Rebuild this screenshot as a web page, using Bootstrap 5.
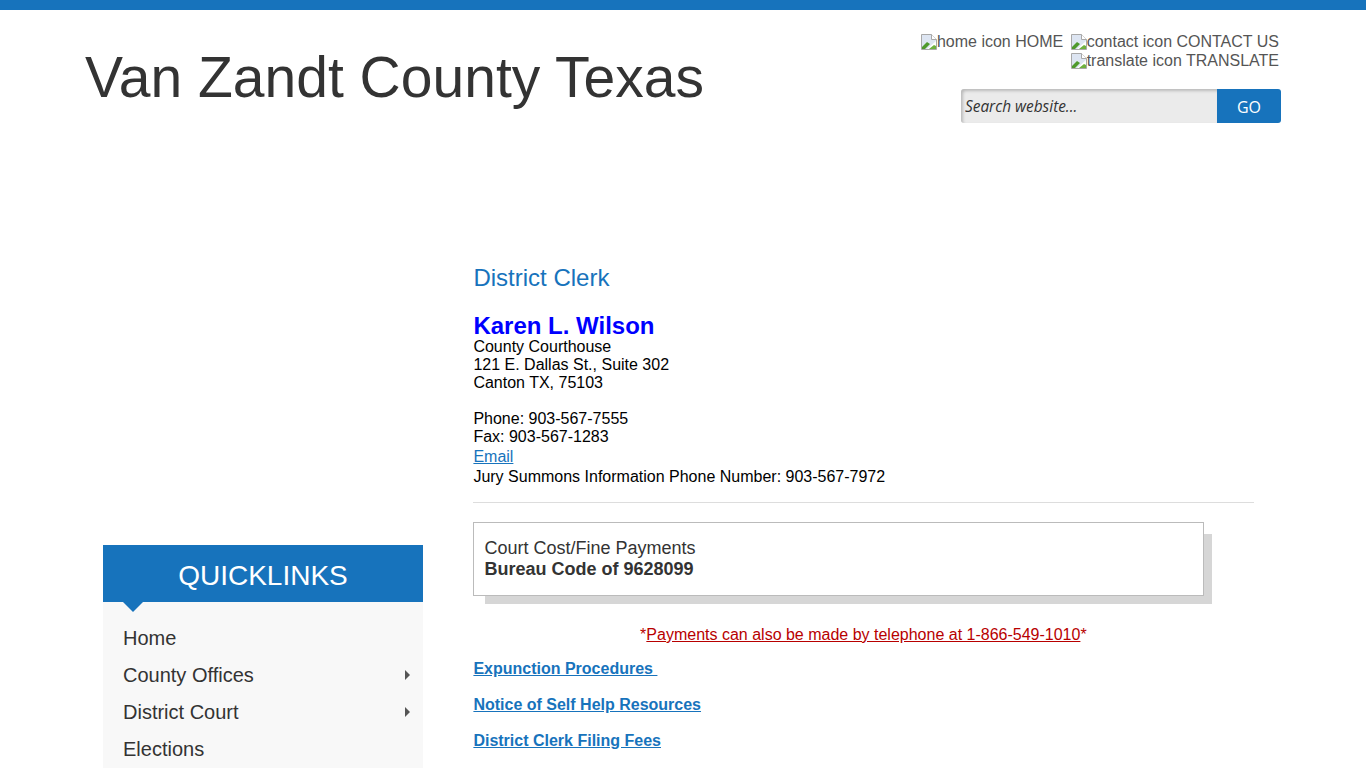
<!DOCTYPE html>
<html>
<head>
  <meta charset="UTF-8">
  <title>District Clerk - Van Zandt County Texas</title>
  <link href="https://cdn.jsdelivr.net/npm/bootstrap@5.3.2/dist/css/bootstrap.min.css" rel="stylesheet">
  <style>
    html, body { height: 768px; overflow: hidden; }
    body { font-family: "Liberation Sans", Arial, sans-serif; font-size: 16px; line-height: 18px; color: #000; background: #fff; }
    a { color: #1773bc; }
    .top-strip { height: 10px; background: #1773bc; }
    .site-head { padding: 0 85px 0 85px; height: 135px; }
    .site-title { font-size: 57px; line-height: 69px; font-weight: 400; color: #333; margin: 33px 0 0; }
    .head-right { width: 380px; padding-top: 22px; }
    .util-links { text-align: right; line-height: 19px; color: #555; padding-right: 2px; white-space: nowrap; }
    .util-links span { margin-left: 3px; }
    .util-links svg { vertical-align: -3px; }
    .search-box { width: 320px; height: 34px; margin: 19px 0 0 auto; }
    .search-box input { flex: 1; min-width: 0; border: 0; outline: 0; background: #ebebeb; box-shadow: inset 2px 2px 3px #bbb; border-radius: 3px 0 0 3px; padding: 2px 4px 0; font-family: "Open Sans", sans-serif; font-style: italic; font-size: 15.4px; color: #333; }
    .search-box input::placeholder { color: #333; opacity: 1; }
    .search-box button { width: 64px; border: 0; background: #1773bc; color: #fff; border-radius: 0 3px 3px 0; font-family: "Open Sans", sans-serif; font-size: 16px; padding-top: 2px; }
    .page-body { padding-left: 103px; }
    .side-col { width: 320px; padding-top: 400px; flex: none; }
    .ql-head { position: relative; height: 57px; background: #1773bc; color: #fff; font-size: 28px; line-height: 62px; text-align: center; }
    .ql-head::after { content: ""; position: absolute; left: 20px; top: 57px; border: 10px solid transparent; border-bottom: 0; border-top-color: #1773bc; }
    .ql-list { background: #f8f8f8; padding: 18px 0 0; margin: 0; list-style: none; }
    .ql-list li { height: 37px; line-height: 37px; padding: 0 13px 0 20px; font-size: 20px; color: #333; }
    .ql-arrow { width: 0; height: 0; border: 5px solid transparent; border-right: 0; border-left-color: #555; margin-top: -1px; }
    .main-col { width: 780.4px; margin-left: 50.4px; padding-top: 119px; flex: none; }
    .sect-title { font-size: 24px; line-height: 28px; font-weight: 400; color: #1773bc; margin: 0 0 21px; }
    .clerk-name { font-size: 24px; line-height: 25px; font-weight: 700; color: #00f; margin: 0; }
    .info-gap { margin: 18px 0 0; }
    .email-line { line-height: 20px; }
    .email-first { margin-top: 1px; }
    .sep-line { border-top: 1px solid #ddd; margin: 15px 0 19px; }
    .pay-wrap { position: relative; width: 731px; height: 74px; margin-bottom: 30px; }
    .pay-shadow { position: absolute; left: 12px; top: 12px; right: -8px; bottom: -8px; background: #d6d6d6; }
    .pay-box { position: absolute; inset: 0; background: #fff; border: 1px solid #bbb; padding: 15px 10px; font-size: 18px; line-height: 21px; color: #333; }
    .tel-note { text-align: center; color: #b80000; margin: 0 0 16px; width: 780px; }
    .tel-note a { color: #b80000; }
    .doc-link { font-weight: 700; margin: 0 0 18px; }
  </style>
</head>
<body>
  <svg width="0" height="0" class="d-block">
    <symbol id="brokenImg" viewBox="0 0 16 16">
      <path d="M.5.5h10l5 5v10H.5z" fill="#dde5f2" stroke="#a8a8a8"/>
      <path d="M10.5.5v5h5" fill="#fff" stroke="#a8a8a8"/>
      <path d="M1 15v-2l5-5 3 2-5 5z" fill="#4f9a2d"/>
      <path d="M6 15l9-8v8z" fill="#fff"/>
      <path d="M8 15l5-4 2 1v3z" fill="#6fb13f"/>
    </symbol>
  </svg>
  <div class="top-strip"></div>

  <header class="site-head d-flex justify-content-between">
    <h1 class="site-title">Van Zandt County Texas</h1>
    <div class="head-right">
      <div class="util-links">
        <span><svg width="16" height="16"><use href="#brokenImg"/></svg>home icon HOME</span>
        <span><svg width="16" height="16"><use href="#brokenImg"/></svg>contact icon CONTACT US</span><br>
        <span><svg width="16" height="16"><use href="#brokenImg"/></svg>translate icon TRANSLATE</span>
      </div>
      <div class="search-box d-flex">
        <input type="text" placeholder="Search website...">
        <button type="button">GO</button>
      </div>
    </div>
  </header>

  <div class="page-body d-flex">
    <aside class="side-col">
      <div class="ql-head">QUICKLINKS</div>
      <ul class="ql-list">
        <li>Home</li>
        <li class="d-flex justify-content-between align-items-center">County Offices <span class="ql-arrow"></span></li>
        <li class="d-flex justify-content-between align-items-center">District Court <span class="ql-arrow"></span></li>
        <li>Elections</li>
      </ul>
    </aside>

    <main class="main-col">
      <h2 class="sect-title">District Clerk</h2>
      <h3 class="clerk-name">Karen L. Wilson</h3>
      <div>County Courthouse<br>121 E. Dallas St., Suite 302<br>Canton TX, 75103</div>
      <div class="info-gap">Phone: 903-567-7555<br>Fax: 903-567-1283</div>
      <div class="email-line email-first"><a href="#">Email</a></div>
      <div class="email-line">Jury Summons Information Phone Number: 903-567-7972</div>
      <div class="sep-line"></div>
      <div class="pay-wrap">
        <div class="pay-shadow"></div>
        <div class="pay-box">Court Cost/Fine Payments<br><strong>Bureau Code of 9628099</strong></div>
      </div>
      <p class="tel-note">*<a href="#">Payments can also be made by telephone at 1-866-549-1010</a>*</p>
      <p class="doc-link"><a href="#">Expunction Procedures&nbsp;</a></p>
      <p class="doc-link"><a href="#">Notice of Self Help Resources</a></p>
      <p class="doc-link"><a href="#">District Clerk Filing Fees</a></p>
    </main>
  </div>

  <script src="https://cdn.jsdelivr.net/npm/bootstrap@5.3.2/dist/js/bootstrap.bundle.min.js"></script>
</body>
</html>
